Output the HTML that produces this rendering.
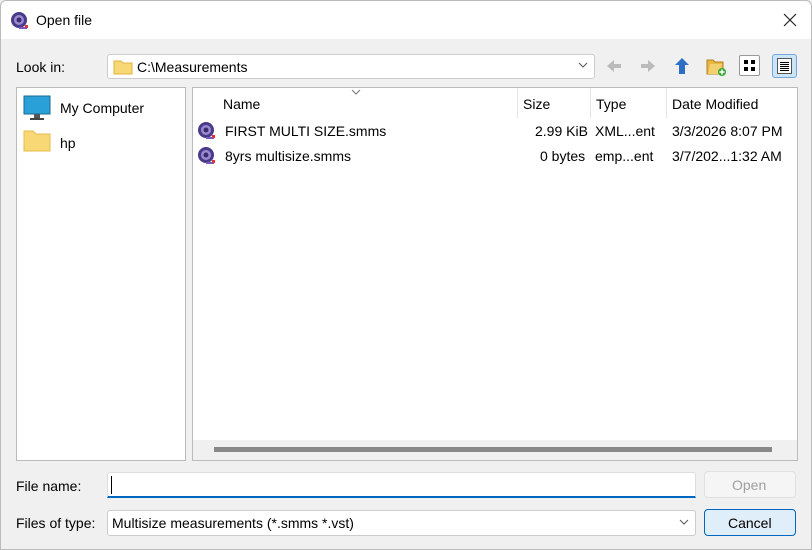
<!DOCTYPE html>
<html><head><style>
*{margin:0;padding:0;box-sizing:border-box}
body{width:812px;height:550px;background:#f0f0f0;font-family:"Liberation Sans",sans-serif;font-size:14px;color:#000;position:relative;overflow:hidden}
.a{position:absolute}
.t{position:absolute;white-space:nowrap;line-height:16px}
</style></head><body>
<div class="a" style="left:0;top:0;width:812px;height:550px;border:1px solid #bbb;border-radius:6px 6px 0 0"></div>
<div class="a" style="left:1px;top:1px;width:810px;height:38px;background:#fff;border-radius:6px 6px 0 0"></div>
<svg class="a" style="left:10px;top:11px" width="20" height="20" viewBox="0 0 20 20"><circle cx="9" cy="9" r="8" fill="#4a3a8a"/><circle cx="9" cy="9" r="5" fill="#9a8ad0"/><circle cx="9" cy="9" r="2.5" fill="#3a2a70"/><path d="M9 16h8v2H9z" fill="#7a5ac0"/><rect x="15" y="14" width="3" height="3" fill="#d33"/></svg>
<div class="t" style="left:36px;top:12px;font-size:14px">Open file</div>
<svg class="a" style="left:783px;top:13px" width="14" height="14"><path d="M1 1L13 13M13 1L1 13" stroke="#222" stroke-width="1.2"/></svg>

<div class="t" style="left:16px;top:59px">Look in:</div>
<div class="a" style="left:107px;top:54px;width:488px;height:25px;background:#fff;border:1px solid #ccc;border-radius:3px"></div>
<svg class="a" style="left:113px;top:58px" width="20" height="17"><path d="M1 3h7l2 2h9v11H1z" fill="#f8d775" stroke="#e0b440" stroke-width="1"/></svg>
<div class="t" style="left:137px;top:59px">C:\Measurements</div>
<svg class="a" style="left:578px;top:62px" width="10" height="7"><path d="M1 1l4 4 4-4" stroke="#555" fill="none"/></svg>
<svg class="a" style="left:606px;top:58px" width="16" height="16"><path d="M1 8l7-6v4h7v4H8v4z" fill="#bbb"/></svg>
<svg class="a" style="left:640px;top:58px" width="16" height="16"><path d="M15 8L8 2v4H1v4h7v4z" fill="#bbb"/></svg>
<svg class="a" style="left:674px;top:57px" width="16" height="18"><path d="M8 1l7 7h-4v9H5V8H1z" fill="#2d6fc4"/></svg>
<svg class="a" style="left:705px;top:55px" width="22" height="22"><path d="M2 5h6l2 2h8v12H2z" fill="#e8b840" stroke="#b08020"/><path d="M5 9h12l-2 10H3z" fill="#f5d070"/><circle cx="17" cy="17" r="4" fill="#3aa83a"/><path d="M17 14.5v5M14.5 17h5" stroke="#fff" stroke-width="1.5"/></svg>
<div class="a" style="left:739px;top:55px;width:21px;height:21px;border:1px solid #999;border-radius:2px;background:#fff"></div>
<div class="a" style="left:744px;top:60px;width:4px;height:4px;background:#000"></div><div class="a" style="left:751px;top:60px;width:4px;height:4px;background:#000"></div>
<div class="a" style="left:744px;top:67px;width:4px;height:4px;background:#000"></div><div class="a" style="left:751px;top:67px;width:4px;height:4px;background:#000"></div>
<div class="a" style="left:772px;top:54px;width:25px;height:24px;border:1px solid #6fa8dc;border-radius:3px;background:#cde4f7"></div>
<div class="a" style="left:777px;top:58px;width:15px;height:16px;border:1px solid #555;background:#fff"></div>
<div class="a" style="left:780px;top:62px;width:9px;height:9px;background:repeating-linear-gradient(#000 0 1px,transparent 1px 2px)"></div>

<div class="a" style="left:16px;top:87px;width:170px;height:374px;background:#fff;border:1px solid #bbb"></div>
<svg class="a" style="left:23px;top:95px" width="28" height="26"><rect x="1" y="1" width="26" height="18" fill="#2aa0d8" stroke="#1a6a90"/><rect x="11" y="19" width="6" height="4" fill="#555"/><rect x="7" y="23" width="14" height="2" fill="#444"/></svg>
<div class="t" style="left:60px;top:100px">My Computer</div>
<svg class="a" style="left:23px;top:130px" width="28" height="22"><path d="M1 1h9l3 3h14v17H1z" fill="#f8d775" stroke="#e6bc4a"/></svg>
<div class="t" style="left:60px;top:135px">hp</div>

<div class="a" style="left:192px;top:87px;width:606px;height:374px;background:#fff;border:1px solid #bbb"></div>
<div class="a" style="left:193px;top:440px;width:604px;height:20px;background:#f0f0f0"></div>
<div class="a" style="left:214px;top:447px;width:558px;height:5px;background:#888"></div>
<div class="a" style="left:517px;top:88px;width:1px;height:30px;background:#e5e5e5"></div>
<div class="a" style="left:590px;top:88px;width:1px;height:30px;background:#e5e5e5"></div>
<div class="a" style="left:666px;top:88px;width:1px;height:30px;background:#e5e5e5"></div>
<svg class="a" style="left:351px;top:89px" width="10" height="6"><path d="M1 1l4 4 4-4" stroke="#777" fill="none"/></svg>
<div class="t" style="left:223px;top:96px">Name</div>
<div class="t" style="left:523px;top:96px">Size</div>
<div class="t" style="left:596px;top:96px">Type</div>
<div class="t" style="left:672px;top:96px">Date Modified</div>
<svg class="a" style="left:197px;top:121px" width="20" height="20" viewBox="0 0 20 20"><circle cx="9" cy="9" r="8" fill="#4a3a8a"/><circle cx="9" cy="9" r="5" fill="#9a8ad0"/><circle cx="9" cy="9" r="2.5" fill="#3a2a70"/><path d="M9 16h8v2H9z" fill="#7a5ac0"/><rect x="15" y="14" width="3" height="3" fill="#d33"/></svg>
<div class="t" style="left:225px;top:123px">FIRST MULTI SIZE.smms</div>
<div class="t" style="left:535px;top:123px">2.99 KiB</div>
<div class="t" style="left:595px;top:123px">XML...ent</div>
<div class="t" style="left:672px;top:123px">3/3/2026 8:07 PM</div>
<svg class="a" style="left:197px;top:146px" width="20" height="20" viewBox="0 0 20 20"><circle cx="9" cy="9" r="8" fill="#4a3a8a"/><circle cx="9" cy="9" r="5" fill="#9a8ad0"/><circle cx="9" cy="9" r="2.5" fill="#3a2a70"/><path d="M9 16h8v2H9z" fill="#7a5ac0"/><rect x="15" y="14" width="3" height="3" fill="#d33"/></svg>
<div class="t" style="left:225px;top:148px">8yrs multisize.smms</div>
<div class="t" style="left:540px;top:148px">0 bytes</div>
<div class="t" style="left:595px;top:148px">emp...ent</div>
<div class="t" style="left:672px;top:148px">3/7/202...1:32 AM</div>

<div class="t" style="left:16px;top:478px">File name:</div>
<div class="a" style="left:107px;top:472px;width:589px;height:26px;background:#fff;border:1px solid #ddd;border-bottom:2px solid #0067c0;border-radius:3px 3px 0 0"></div>
<div class="a" style="left:111px;top:476px;width:1px;height:18px;background:#000"></div>
<div class="a" style="left:704px;top:471px;width:92px;height:27px;border:1px solid #e0e0e0;border-radius:4px;background:#f5f5f5"></div>
<div class="t" style="left:732px;top:477px;color:#a0a0a0">Open</div>

<div class="t" style="left:16px;top:515px">Files of type:</div>
<div class="a" style="left:107px;top:510px;width:589px;height:26px;background:#fff;border:1px solid #ccc;border-radius:3px"></div>
<div class="t" style="left:112px;top:515px">Multisize measurements (*.smms *.vst)</div>
<svg class="a" style="left:679px;top:519px" width="10" height="7"><path d="M1 1l4 4 4-4" stroke="#555" fill="none"/></svg>
<div class="a" style="left:704px;top:509px;width:92px;height:27px;border:1px solid #0067c0;border-radius:4px;background:#e0eef9"></div>
<div class="t" style="left:728px;top:515px">Cancel</div>
</body></html>
